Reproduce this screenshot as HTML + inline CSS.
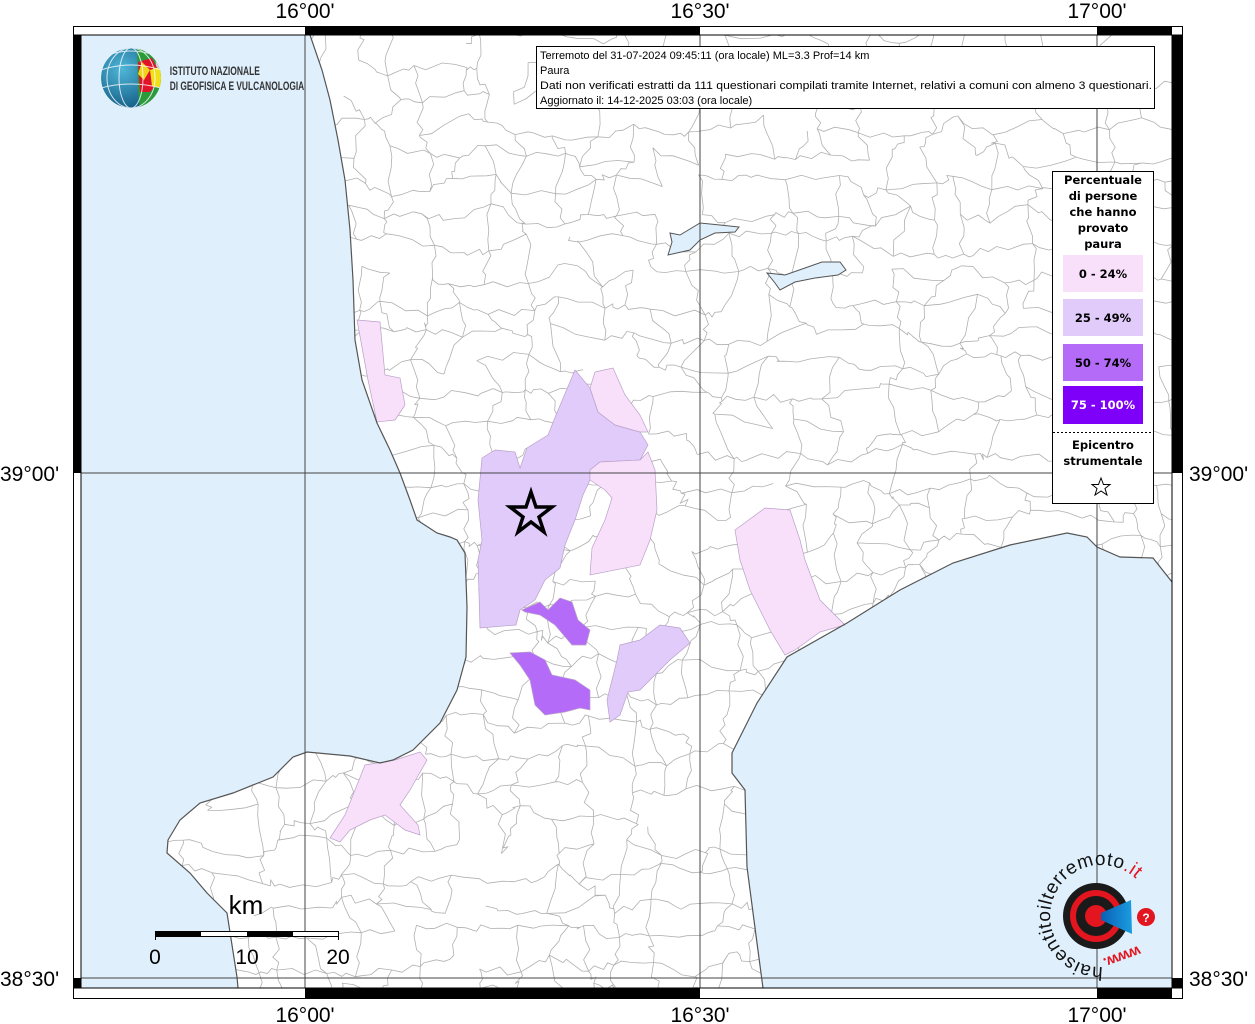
<!DOCTYPE html>
<html><head><meta charset="utf-8"><style>
html,body{margin:0;padding:0;background:#fff;}
body{width:1255px;height:1024px;overflow:hidden;position:relative;font-family:"Liberation Sans",sans-serif;}
svg{position:absolute;left:0;top:0;}
.lbl{font-family:"Liberation Sans",sans-serif;font-size:21px;fill:#000;}
.leg{font-family:"DejaVu Sans",sans-serif;font-weight:bold;font-size:11.5px;fill:#000;text-anchor:middle;}
.info{font-family:"Liberation Sans",sans-serif;font-size:11px;fill:#000;}
</style></head><body>
<svg width="1255" height="1024" viewBox="0 0 1255 1024" xmlns="http://www.w3.org/2000/svg">
<defs>
<clipPath id="map"><rect x="81" y="35" width="1091" height="953"/></clipPath>
<clipPath id="landclip"><path id="landp" d="M310,35 L322,70 L330,100 L338,140 L345,180 L350,230 L353,280 L355,340 L362,380 L377,423 L390,450 L400,473 L410,500 L417,520 L437,533 L450,537 L457,540 L465,553 L467,607 L466,657 L457,690 L440,723 L413,750 L393,760 L380,763 L350,756 L307,752 L293,757 L273,777 L233,793 L200,803 L180,820 L168,840 L167,853 L190,873 L207,893 L227,913 L237,977 L238,988 L763,988 L757,943 L747,867 L745,790 L732,773 L732,753 L757,703 L787,657 L847,623 L900,590 L953,563 L1010,545 L1067,533 L1087,537 L1097,547 L1120,557 L1153,558 L1172,582 L1172,35 Z"/></clipPath>
</defs>
<g clip-path="url(#map)">
<rect x="81" y="35" width="1091" height="953" fill="#dff0fc"/>
<use href="#landp" fill="#fff"/>
<g id="borders" clip-path="url(#landclip)" fill="none" stroke="#b0b0b0" stroke-width="0.8"></g>
<!-- colored municipalities -->
<g stroke="#b9a0c8" stroke-width="0.7">
<path fill="#f8e0fb" d="M357,320 L380,322 L385,375 L400,378 L405,405 L395,420 L377,422 L368,380 Z"/>
<path fill="#e0cbfb" d="M482,458 L495,450 L515,452 L520,468 L527,448 L548,435 L556,415 L575,370 L590,388 L598,412 L615,425 L640,432 L648,445 L640,460 L600,462 L590,470 L590,480 L583,495 L575,520 L565,545 L560,568 L545,580 L535,600 L520,610 L516,625 L480,628 L478,560 L482,540 L478,500 Z"/>
<path fill="#f8e0fb" d="M595,372 L613,368 L625,395 L640,415 L648,432 L640,432 L615,425 L598,412 L590,388 Z"/>
<path fill="#f8e0fb" d="M600,462 L640,460 L648,452 L655,470 L657,510 L650,540 L640,565 L590,575 L592,548 L605,520 L612,498 L605,490 L590,480 L590,470 Z"/>
<path fill="#f8e0fb" d="M735,530 L765,508 L790,510 L800,540 L805,560 L820,600 L845,625 L820,632 L795,650 L785,655 L770,630 L750,590 L740,560 Z"/>
<path fill="#b46cf8" d="M522,610 L540,602 L548,610 L560,598 L572,602 L578,620 L590,630 L586,645 L572,645 L555,625 L540,615 L525,612 Z"/>
<path fill="#b46cf8" d="M510,653 L530,652 L545,660 L552,675 L575,680 L590,690 L590,710 L580,708 L565,712 L545,715 L535,705 L530,680 L520,665 Z"/>
<path fill="#e0cbfb" d="M620,645 L640,640 L660,625 L680,628 L690,643 L670,660 L650,680 L640,690 L628,692 L620,715 L610,722 L607,700 L612,680 L617,660 Z"/>
<path fill="#f8e0fb" d="M365,765 L395,760 L420,752 L427,760 L410,790 L400,805 L418,825 L420,835 L405,830 L385,815 L370,820 L350,830 L340,842 L330,838 L345,815 L355,790 Z"/>
</g>
<path d="M310,35 L322,70 L330,100 L338,140 L345,180 L350,230 L353,280 L355,340 L362,380 L377,423 L390,450 L400,473 L410,500 L417,520 L437,533 L450,537 L457,540 L465,553 L467,607 L466,657 L457,690 L440,723 L413,750 L393,760 L380,763 L350,756 L307,752 L293,757 L273,777 L233,793 L200,803 L180,820 L168,840 L167,853 L190,873 L207,893 L227,913 L237,977 L238,988 M763,988 L757,943 L747,867 L745,790 L732,773 L732,753 L757,703 L787,657 L847,623 L900,590 L953,563 L1010,545 L1067,533 L1087,537 L1097,547 L1120,557 L1153,558 L1172,582" fill="none" stroke="#555" stroke-width="1.2"/>
<path fill="#dff0fc" stroke="#555" stroke-width="1" d="M670,233 L680,235 L700,223 L720,225 L739,227 L735,232 L715,233 L700,240 L690,250 L668,255 L672,242 Z"/>
<path fill="#dff0fc" stroke="#555" stroke-width="1" d="M767,273 L785,275 L805,268 L822,262 L840,262 L846,270 L838,275 L815,278 L795,282 L780,290 L775,283 Z"/>
<g stroke="#444" stroke-width="1">
<line x1="305" y1="35" x2="305" y2="988"/><line x1="700" y1="35" x2="700" y2="988"/><line x1="1097" y1="35" x2="1097" y2="988"/>
<line x1="81" y1="473" x2="1172" y2="473"/><line x1="81" y1="978" x2="1172" y2="978"/>
</g>
</g>
<!-- frame -->
<rect x="73.5" y="26.5" width="1109" height="972" fill="none" stroke="#000"/>
<rect x="81" y="35" width="1091" height="953" fill="none" stroke="#000" stroke-width="1"/>
<rect x="305" y="27" width="395" height="8" fill="#000"/><rect x="1097" y="27" width="75" height="8" fill="#000"/>
<rect x="305" y="988" width="395" height="10" fill="#000"/><rect x="1097" y="988" width="75" height="10" fill="#000"/>
<rect x="74" y="35" width="7" height="438" fill="#000"/><rect x="74" y="978" width="7" height="10" fill="#000"/>
<rect x="1172" y="35" width="10" height="438" fill="#000"/><rect x="1172" y="978" width="10" height="10" fill="#000"/>
<line x1="74" y1="35" x2="1182" y2="35" stroke="#000"/><line x1="74" y1="988" x2="1182" y2="988" stroke="#000"/>
<!-- labels -->
<g class="lbl" text-anchor="middle">
<text x="305" y="18">16°00'</text><text x="700" y="18">16°30'</text><text x="1097" y="18">17°00'</text>
<text x="305" y="1022">16°00'</text><text x="700" y="1022">16°30'</text><text x="1097" y="1022">17°00'</text>
</g>
<g class="lbl"><text x="0" y="481">39°00'</text><text x="0" y="986">38°30'</text>
<text x="1189" y="481">39°00'</text><text x="1189" y="986">38°30'</text></g>
<!-- info box -->
<rect x="536.5" y="46.5" width="618" height="62" fill="#fff" stroke="#000"/>
<g class="info"><text x="540" y="59">Terremoto del 31-07-2024 09:45:11 (ora locale) ML=3.3 Prof=14 km</text>
<text x="540" y="74">Paura</text>
<text x="540" y="89" textLength="612" lengthAdjust="spacingAndGlyphs">Dati non verificati estratti da 111 questionari compilati tramite Internet, relativi a comuni con almeno 3 questionari.</text>
<text x="540" y="104">Aggiornato il: 14-12-2025 03:03 (ora locale)</text></g>
<!-- legend -->
<rect x="1052.5" y="171.5" width="101" height="332" fill="#fff" stroke="#000"/>
<g class="leg"><text x="1103" y="184">Percentuale</text><text x="1103" y="200">di persone</text><text x="1103" y="216">che hanno</text><text x="1103" y="232">provato</text><text x="1103" y="248">paura</text></g>
<rect x="1063" y="255" width="80" height="37" fill="#f8e0fb"/>
<rect x="1063" y="299" width="80" height="37" fill="#e0cbfb"/>
<rect x="1063" y="344" width="80" height="37" fill="#b46cf8"/>
<rect x="1063" y="386" width="80" height="38" fill="#7f00f8"/>
<g class="leg"><text x="1103" y="278">0 - 24%</text><text x="1103" y="322">25 - 49%</text><text x="1103" y="367">50 - 74%</text><text x="1103" y="409" fill="#fff">75 - 100%</text>
<text x="1103" y="449">Epicentro</text><text x="1103" y="465">strumentale</text></g>
<line x1="1053" y1="432.5" x2="1153" y2="432.5" stroke="#000" stroke-dasharray="2,2"/>
<path d="M1101,478 L1103.5,484.5 L1110,484.5 L1105,488.5 L1107,495 L1101,491 L1095,495 L1097,488.5 L1092,484.5 L1098.5,484.5 Z" fill="#fff" stroke="#000" stroke-width="1"/>
<!-- epicentre star -->
<path d="M531,492 L536,507 L552,507 L539,517 L544,532 L531,522 L518,532 L523,517 L510,507 L526,507 Z" fill="#e0cbfb" stroke="#000" stroke-width="3.5" stroke-linejoin="miter"/>
<!-- scale bar -->
<text x="246" y="914" font-family="Liberation Sans,sans-serif" font-size="26" text-anchor="middle">km</text>
<rect x="155.5" y="931.5" width="183" height="5" fill="#fff" stroke="#000"/>
<rect x="155" y="931" width="46" height="6" fill="#000"/><rect x="247" y="931" width="46" height="6" fill="#000"/>
<line x1="155.5" y1="931" x2="155.5" y2="940" stroke="#000"/><line x1="338.5" y1="931" x2="338.5" y2="940" stroke="#000"/>
<g font-family="Liberation Sans,sans-serif" font-size="21" text-anchor="middle"><text x="155" y="964">0</text><text x="247" y="964">10</text><text x="338" y="964">20</text></g>
<!-- INGV logo -->
<defs><clipPath id="globe"><circle cx="131" cy="78" r="30"/></clipPath>
<radialGradient id="gg" cx="0.35" cy="0.35" r="0.8"><stop offset="0" stop-color="#4fb7d8"/><stop offset="1" stop-color="#0b4f7a"/></radialGradient></defs>
<g clip-path="url(#globe)">
<circle cx="131" cy="78" r="30" fill="url(#gg)"/>
<path d="M137,48 L162,48 L162,110 L140,110 L138,90 Z" fill="#2a9a3a"/>
<path d="M138,62 L152,58 L158,70 L160,80 L150,92 L140,92 Z" fill="#e0132a"/>
<path d="M142,62 L150,70 L144,80 L138,74 Z" fill="#f0d21a"/>
<path d="M150,70 L162,66 L162,88 L152,86 Z" fill="#f0e01a"/>
<path d="M155,52 L162,52 L162,72 L156,66 Z" fill="#d8c8d8"/>
<g fill="none" stroke="#fff" stroke-width="1" opacity="0.8"><ellipse cx="131" cy="78" rx="12" ry="30"/><ellipse cx="131" cy="78" rx="24" ry="30"/><path d="M101,70 Q131,60 161,70 M101,88 Q131,80 161,88 M105,56 Q131,46 157,56"/></g>
</g>
<g font-family="Liberation Sans,sans-serif" font-size="12" font-weight="bold" fill="#333" transform="scale(0.82,1)">
<text x="207" y="75" textLength="110" lengthAdjust="spacingAndGlyphs">ISTITUTO NAZIONALE</text>
<text x="207" y="90" textLength="164" lengthAdjust="spacingAndGlyphs">DI GEOFISICA E VULCANOLOGIA</text></g>
<!-- haisentito logo -->
<defs><path id="arc" d="M1103,967 A51,51 0 1,1 1145,890"/><linearGradient id="bl" x1="0" x2="1"><stop offset="0" stop-color="#0a5fb5"/><stop offset="1" stop-color="#1a9de0"/></linearGradient></defs>
<circle cx="1096" cy="916" r="33" fill="#1a1a1a"/>
<circle cx="1096" cy="916" r="23" fill="none" stroke="#e3151f" stroke-width="6"/>
<circle cx="1096" cy="916" r="11" fill="#e3151f"/>
<path d="M1101,913 L1131,900 L1132,934 L1101,920 Z" fill="url(#bl)"/>
<circle cx="1146" cy="917" r="9" fill="#e3151f"/><text x="1146" y="922" font-size="12" fill="#fff" text-anchor="middle" font-family="Liberation Sans,sans-serif" font-weight="bold">?</text>
<text font-family="Liberation Sans,sans-serif" font-size="19" fill="#111" textLength="200"><textPath href="#arc">haisentito<tspan>il</tspan>terremoto<tspan fill="#e3151f">.it</tspan></textPath></text>
<text x="1122" y="962" font-family="Liberation Sans,sans-serif" font-size="15" font-weight="bold" fill="#e3151f" transform="rotate(160 1122 957)" text-anchor="middle">www.</text>
</svg>
<script>
(function(){
var g=document.getElementById('borders');var s=12345;function r(){s=(s*1103515245+12345)&0x7fffffff;return s/0x7fffffff;}
var sx=34,sy=30,nx=32,ny=33,x0=150,y0=35,P=[];
for(var j=0;j<=ny;j++){P[j]=[];for(var i=0;i<=nx;i++){P[j][i]=[x0+i*sx+(r()-0.5)*sx*0.8,y0+j*sy+(r()-0.5)*sy*0.8];}}
function seg(a,b){var p='M'+a[0].toFixed(1)+','+a[1].toFixed(1);var n=4;for(var k=1;k<=n;k++){var t=k/n;var x=a[0]+(b[0]-a[0])*t,y=a[1]+(b[1]-a[1])*t;if(k<n){x+=(r()-0.5)*8;y+=(r()-0.5)*8;}p+=' L'+x.toFixed(1)+','+y.toFixed(1);}return p+' ';}
var d='';
for(var j=0;j<=ny;j++)for(var i=0;i<=nx;i++){
 if(i<nx&&r()<0.85)d+=seg(P[j][i],P[j][i+1]);
 if(j<ny&&r()<0.7)d+=seg(P[j][i],P[j+1][i]);
}
var e=document.createElementNS('http://www.w3.org/2000/svg','path');e.setAttribute('d',d);g.appendChild(e);
})();
</script>
</body></html>
